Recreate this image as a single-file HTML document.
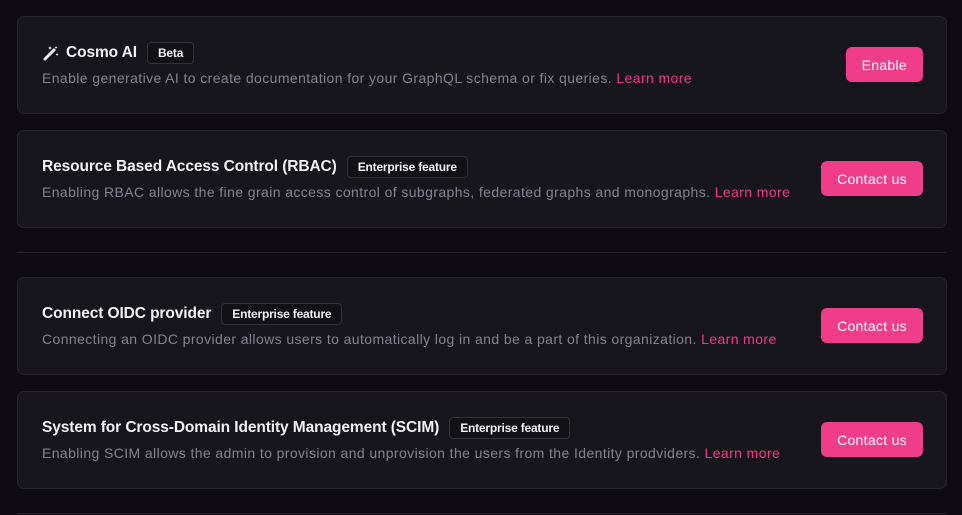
<!DOCTYPE html>
<html><head><style>
body{margin:0;background:#0e0c12;width:962px;height:515px;overflow:hidden;font-family:"Liberation Sans",sans-serif;}
.card{position:absolute;left:17px;width:930px;height:98px;background:#17161c;border:1px solid #26252c;border-radius:7px;box-sizing:border-box;}
.title{position:absolute;left:24px;top:24px;height:24px;display:flex;align-items:center;color:#f2f2f4;font-size:15.5px;font-weight:bold;letter-spacing:-0.1px;}
.badge{margin-left:10px;border:1px solid #33323a;border-radius:4px;font-size:12px;font-weight:bold;padding:3px 10px;color:#f0f0f2;background:#121116;letter-spacing:-0.2px;}
.desc{position:absolute;left:24px;top:53px;font-size:14px;color:#85828f;white-space:nowrap;letter-spacing:0.4px;}
.desc a{color:#f0388a;text-decoration:none;}
.btn{position:absolute;right:23px;top:30px;height:35px;background:#f03d8a;color:#fff;font-size:14px;border-radius:6px;display:flex;align-items:center;padding:0 16px;box-sizing:border-box;letter-spacing:0.3px;}
.div{position:absolute;left:17px;width:930px;height:1px;background:#26252c;}
</style></head><body>
<div class="card" style="top:16px"><div class="title"><svg width="18" height="18" viewBox="0 0 18 18" style="margin-right:6px"><path d="M3 15L12 6" stroke="#eee" stroke-width="3" stroke-linecap="round"/><path d="M8 2l.6 1.4L10 4l-1.4.6L8 6l-.6-1.4L6 4l1.4-.6zM14 2l.5 1 1 .5-1 .5-.5 1-.5-1-1-.5 1-.5zM15 9l.5 1 1 .5-1 .5-.5 1-.5-1-1-.5 1-.5z" fill="#eee"/></svg>Cosmo AI<span class="badge">Beta</span></div><div class="desc">Enable generative AI to create documentation for your GraphQL schema or fix queries. <a>Learn more</a></div><div class="btn">Enable</div></div>
<div class="card" style="top:130px"><div class="title">Resource Based Access Control (RBAC)<span class="badge">Enterprise feature</span></div><div class="desc">Enabling RBAC allows the fine grain access control of subgraphs, federated graphs and monographs. <a>Learn more</a></div><div class="btn">Contact us</div></div>
<div class="div" style="top:252px"></div>
<div class="card" style="top:277px"><div class="title">Connect OIDC provider<span class="badge">Enterprise feature</span></div><div class="desc">Connecting an OIDC provider allows users to automatically log in and be a part of this organization. <a>Learn more</a></div><div class="btn">Contact us</div></div>
<div class="card" style="top:391px"><div class="title">System for Cross-Domain Identity Management (SCIM)<span class="badge">Enterprise feature</span></div><div class="desc">Enabling SCIM allows the admin to provision and unprovision the users from the Identity prodviders. <a>Learn more</a></div><div class="btn">Contact us</div></div>
<div class="div" style="top:513px"></div>
</body></html>
